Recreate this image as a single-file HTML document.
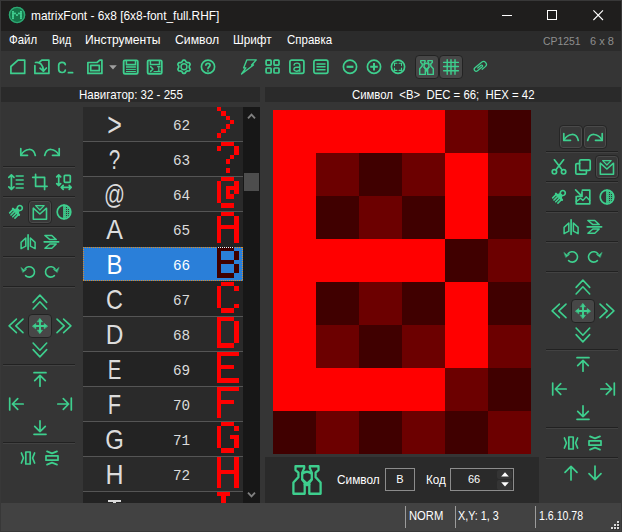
<!DOCTYPE html>
<html><head><meta charset="utf-8"><title>matrixFont</title>
<style>
html,body{margin:0;padding:0;}
body{width:622px;height:532px;overflow:hidden;background:#353535;position:relative;font-family:'Liberation Sans',sans-serif;}
</style></head><body>
<div style="position:absolute;left:0px;top:0px;width:622px;height:31px;background:#1f1e1d;"></div>
<svg style="position:absolute;left:0;top:0" width="32" height="30" viewBox="0 0 32 30"><circle cx="17.05" cy="14.95" r="8.3" fill="#157449"/><circle cx="17.05" cy="14.95" r="7.6" fill="none" stroke="#2ea873" stroke-width="1.3"/><g fill="#46d89a"><rect x="12.10" y="11.00" width="1.75" height="1.7"/><rect x="20.10" y="11.00" width="1.75" height="1.7"/><rect x="12.10" y="12.60" width="1.75" height="1.7"/><rect x="14.10" y="12.60" width="1.75" height="1.7"/><rect x="18.10" y="12.60" width="1.75" height="1.7"/><rect x="20.10" y="12.60" width="1.75" height="1.7"/><rect x="12.10" y="14.20" width="1.75" height="1.7"/><rect x="16.10" y="14.20" width="1.75" height="1.7"/><rect x="20.10" y="14.20" width="1.75" height="1.7"/><rect x="12.10" y="15.80" width="1.75" height="1.7"/><rect x="20.10" y="15.80" width="1.75" height="1.7"/><rect x="12.10" y="17.40" width="1.75" height="1.7"/><rect x="20.10" y="17.40" width="1.75" height="1.7"/></g></svg>
<div style="position:absolute;left:31px;top:11px;font-family:'Liberation Sans',sans-serif;font-size:11.9px;line-height:11.9px;color:#ffffff;white-space:pre;">matrixFont - 6x8 [6x8-font_full.RHF]</div>
<div style="position:absolute;left:502px;top:15px;width:10px;height:1px;background:#ffffff;"></div>
<div style="position:absolute;left:547px;top:10px;width:10px;height:10px;background:transparent;border:1px solid #fff;box-sizing:border-box;"></div>
<svg style="position:absolute;left:593.3px;top:10.2px" width="10.4" height="10.4" viewBox="0 0 10.4 10.4"><path d="M0.4 0.4L10 10M10 0.4L0.4 10" stroke="#fff" stroke-width="1.1"/></svg>
<div style="position:absolute;left:0px;top:31px;width:622px;height:20px;background:#2b2b2b;"></div>
<div style="position:absolute;left:8.60px;top:34.53px;font-family:'Liberation Sans',sans-serif;font-size:11.9px;line-height:11.9px;color:#ffffff;white-space:pre;transform-origin:0 0;transform:scaleX(0.9633);">Файл</div>
<div style="position:absolute;left:51.80px;top:34.53px;font-family:'Liberation Sans',sans-serif;font-size:11.9px;line-height:11.9px;color:#ffffff;white-space:pre;transform-origin:0 0;transform:scaleX(0.8868);">Вид</div>
<div style="position:absolute;left:85.30px;top:34.53px;font-family:'Liberation Sans',sans-serif;font-size:11.9px;line-height:11.9px;color:#ffffff;white-space:pre;transform-origin:0 0;transform:scaleX(1.0176);">Инструменты</div>
<div style="position:absolute;left:175.30px;top:34.53px;font-family:'Liberation Sans',sans-serif;font-size:11.9px;line-height:11.9px;color:#ffffff;white-space:pre;transform-origin:0 0;transform:scaleX(1.0280);">Символ</div>
<div style="position:absolute;left:233.40px;top:34.53px;font-family:'Liberation Sans',sans-serif;font-size:11.9px;line-height:11.9px;color:#ffffff;white-space:pre;transform-origin:0 0;transform:scaleX(0.9859);">Шрифт</div>
<div style="position:absolute;left:286.50px;top:34.53px;font-family:'Liberation Sans',sans-serif;font-size:11.9px;line-height:11.9px;color:#ffffff;white-space:pre;transform-origin:0 0;transform:scaleX(0.9656);">Справка</div>
<div style="position:absolute;left:542.80px;top:34.98px;font-family:'Liberation Sans',sans-serif;font-size:11.6px;line-height:11.6px;color:#8e8e8e;white-space:pre;transform-origin:0 0;transform:scaleX(0.8990);">CP1251</div>
<div style="position:absolute;left:590.30px;top:34.98px;font-family:'Liberation Sans',sans-serif;font-size:11.6px;line-height:11.6px;color:#8e8e8e;white-space:pre;transform-origin:0 0;transform:scaleX(0.9495);">6 x 8</div>
<svg style="position:absolute;left:8.0px;top:57.0px;overflow:visible" width="20" height="20" viewBox="0 0 20 20" fill="none" stroke="#3ecf8e" stroke-width="1.7" stroke-linecap="round" stroke-linejoin="round"><path d="M2.9 16.4V9.5L10 3.1H16.7V16.4Z"/></svg>
<svg style="position:absolute;left:32.0px;top:57.0px;overflow:visible" width="20" height="20" viewBox="0 0 20 20" fill="none" stroke="#3ecf8e" stroke-width="1.7" stroke-linecap="round" stroke-linejoin="round"><path d="M2.9 8.5V16.4H16.9V3.1H9.8L7.5 5.2"/><path d="M3.5 5.5C8 4.5 11.3 8 11.4 14"/><path d="M8 11.2L11.4 14.2L14.4 11"/></svg>
<svg style="position:absolute;left:56.3px;top:57.0px;overflow:visible" width="20" height="20" viewBox="0 0 20 20" fill="none" stroke="#3ecf8e" stroke-width="1.7" stroke-linecap="round" stroke-linejoin="round"><path d="M9.3 7.6C8.9 4.4 3 4.5 2.7 8V12.6C3 16.3 8.9 16.4 9.3 13.2"/><path d="M12.4 15.7H16.6"/></svg>
<svg style="position:absolute;left:85.2px;top:57.0px;overflow:visible" width="20" height="20" viewBox="0 0 20 20" fill="none" stroke="#3ecf8e" stroke-width="1.7" stroke-linecap="round" stroke-linejoin="round"><path d="M2.9 16.4V5.5H12L14.8 3.1H16.9V16.4Z"/><rect x="5.7" y="8.3" width="8.6" height="5.4"/></svg>
<svg style="position:absolute;left:121.19999999999999px;top:57.0px;overflow:visible" width="20" height="20" viewBox="0 0 20 20" fill="none" stroke="#3ecf8e" stroke-width="1.7" stroke-linecap="round" stroke-linejoin="round"><rect x="2.65" y="3.3" width="14.1" height="13.4" rx="1.3" stroke-width="1.85"/><path d="M5.4 3.6V7.4H14.5V3.6" stroke-width="1.5" stroke-linecap="butt" stroke-linejoin="miter"/><path d="M5 9.85H14.9" stroke-width="2.5" stroke-linecap="butt" stroke-opacity=".78"/><path d="M5 12.45H14.9" stroke-width=".95" stroke-linecap="butt"/><path d="M5 14.5H14.9" stroke-width="1.05" stroke-linecap="butt"/></svg>
<svg style="position:absolute;left:145.0px;top:57.0px;overflow:visible" width="20" height="20" viewBox="0 0 20 20" fill="none" stroke="#3ecf8e" stroke-width="1.7" stroke-linecap="round" stroke-linejoin="round"><rect x="2.65" y="3.3" width="14.1" height="13.4" rx="1.3" stroke-width="1.85"/><path d="M5.4 3.6V7.4H14.5V3.6" stroke-width="1.5" stroke-linecap="butt" stroke-linejoin="miter"/><path d="M5.6 9.6L8 12L5.6 14.4" stroke-width="1.5"/><path d="M9 14.5H13" stroke-width="1.2"/><path d="M13.8 9.8V14.4M12.6 9.7H15M12.6 14.4H15.2" stroke-width="1.2"/></svg>
<svg style="position:absolute;left:174.1px;top:57.0px;overflow:visible" width="20" height="20" viewBox="0 0 20 20" fill="none" stroke="#3ecf8e" stroke-width="1.7" stroke-linecap="round" stroke-linejoin="round"><path d="M15.24 9.80 L15.24 10.26 L15.33 10.74 L15.75 11.34 L16.10 12.02 L16.01 12.60 L15.77 13.13 L15.44 13.61 L14.97 13.97 L14.21 14.01 L13.48 13.95 L13.02 14.11 L12.62 14.34 L12.22 14.57 L11.85 14.89 L11.54 15.55 L11.13 16.19 L10.58 16.41 L10.00 16.46 L9.42 16.41 L8.87 16.19 L8.46 15.55 L8.15 14.89 L7.78 14.57 L7.38 14.34 L6.98 14.11 L6.52 13.95 L5.79 14.01 L5.03 13.97 L4.56 13.61 L4.23 13.13 L3.99 12.60 L3.90 12.02 L4.25 11.34 L4.67 10.74 L4.76 10.26 L4.76 9.80 L4.76 9.34 L4.67 8.86 L4.25 8.26 L3.90 7.58 L3.99 7.00 L4.23 6.47 L4.56 5.99 L5.03 5.63 L5.79 5.59 L6.52 5.65 L6.98 5.49 L7.38 5.26 L7.78 5.03 L8.15 4.71 L8.46 4.05 L8.87 3.41 L9.42 3.19 L10.00 3.14 L10.58 3.19 L11.13 3.41 L11.54 4.05 L11.85 4.71 L12.22 5.03 L12.62 5.26 L13.02 5.49 L13.48 5.65 L14.21 5.59 L14.97 5.63 L15.44 5.99 L15.77 6.47 L16.01 7.00 L16.10 7.58 L15.75 8.26 L15.33 8.86 L15.24 9.34Z"/><circle cx="10" cy="9.8" r="2.95" stroke-width="1.5"/></svg>
<svg style="position:absolute;left:198.2px;top:57.0px;overflow:visible" width="20" height="20" viewBox="0 0 20 20" fill="none" stroke="#3ecf8e" stroke-width="1.7" stroke-linecap="round" stroke-linejoin="round"><circle cx="10" cy="9.8" r="6.6"/><path d="M7.9 8.1C7.9 5.7 12.1 5.7 12.1 8.1C12.1 9.7 10 9.8 10 11.6"/><path d="M10 13.9V14"/></svg>
<svg style="position:absolute;left:239.3px;top:57.0px;overflow:visible" width="20" height="20" viewBox="0 0 20 20" fill="none" stroke="#3ecf8e" stroke-width="1.7" stroke-linecap="round" stroke-linejoin="round"><path d="M7.8 2.9H17.3L12.6 8H14.5L2.6 17L6.8 10.9H4.6Z" stroke-width="1.4"/></svg>
<svg style="position:absolute;left:263.0px;top:57.0px;overflow:visible" width="20" height="20" viewBox="0 0 20 20" fill="none" stroke="#3ecf8e" stroke-width="1.7" stroke-linecap="round" stroke-linejoin="round"><rect x="3.1" y="3.1" width="5" height="5" rx=".8"/><rect x="11" y="3.1" width="5" height="5" rx=".8"/><rect x="3.1" y="11" width="5" height="5" rx=".8"/><rect x="11" y="11" width="5" height="5" rx=".8"/></svg>
<svg style="position:absolute;left:287.3px;top:57.0px;overflow:visible" width="20" height="20" viewBox="0 0 20 20" fill="none" stroke="#3ecf8e" stroke-width="1.7" stroke-linecap="round" stroke-linejoin="round"><rect x="2.9" y="3.1" width="14" height="13.3" rx="1.8"/><path d="M7 8C7.6 5.4 12.8 5.4 12.8 8.3V14.2M12.8 10.2H9.8C6 10.2 6 14.2 9.5 14.2C11.6 14.2 12.8 13 12.8 11.8" stroke-width="1.4"/></svg>
<svg style="position:absolute;left:311.1px;top:57.0px;overflow:visible" width="20" height="20" viewBox="0 0 20 20" fill="none" stroke="#3ecf8e" stroke-width="1.7" stroke-linecap="round" stroke-linejoin="round"><rect x="2.9" y="3.1" width="14" height="13.3" rx="1.8"/><path d="M6 6.9H14M6 9.8H14M6 12.7H14" stroke-width="1.5"/></svg>
<svg style="position:absolute;left:340.0px;top:57.0px;overflow:visible" width="20" height="20" viewBox="0 0 20 20" fill="none" stroke="#3ecf8e" stroke-width="1.7" stroke-linecap="round" stroke-linejoin="round"><circle cx="10" cy="9.8" r="6.6"/><path d="M6.6 9.8H13.4" stroke-width="2.2" stroke-linecap="butt"/></svg>
<svg style="position:absolute;left:364.0px;top:57.0px;overflow:visible" width="20" height="20" viewBox="0 0 20 20" fill="none" stroke="#3ecf8e" stroke-width="1.7" stroke-linecap="round" stroke-linejoin="round"><circle cx="10" cy="9.8" r="6.6"/><path d="M6.2 9.8H13.8M10 6V13.6" stroke-width="2" stroke-linecap="butt"/></svg>
<svg style="position:absolute;left:388.3px;top:57.0px;overflow:visible" width="20" height="20" viewBox="0 0 20 20" fill="none" stroke="#3ecf8e" stroke-width="1.7" stroke-linecap="round" stroke-linejoin="round"><circle cx="10" cy="9.8" r="6.6"/><path d="M6.5 8.6V6.2H8.9M11.1 6.2H13.5V8.6M13.5 11V13.4H11.1M8.9 13.4H6.5V11" stroke-width="1.1"/></svg>
<svg style="position:absolute;left:108.5px;top:65px" width="8" height="5" viewBox="0 0 8 5"><path d="M0.2 0.3H7.8L4 4.4Z" fill="#a0a0a0"/></svg>
<div style="position:absolute;left:415px;top:55px;width:24px;height:24px;background:#474747;border:1px solid #232323;border-radius:4px;box-sizing:border-box;"></div>
<div style="position:absolute;left:439px;top:55px;width:24px;height:24px;background:#474747;border:1px solid #232323;border-radius:4px;box-sizing:border-box;"></div>
<svg style="position:absolute;left:419.4px;top:59.650000000000006px;overflow:visible" width="15" height="15" viewBox="0 0 15 15" fill="none" stroke="#3ecf8e" stroke-width="1.45" stroke-linecap="round" stroke-linejoin="round"><g transform="scale(.5)" stroke-width="2.9"><path d="M3.5 1.25H12.2V3.15L10.2 7.65V14.45L12.7 17.85V28.75H1.4V17.45L6.4 12.15V7.65L3.5 5.05Z"/><path d="M26.5 1.25H17.8V3.15L19.8 7.65V14.45L17.3 17.85V28.75H28.6V17.45L23.6 12.15V7.65L26.5 5.05Z"/><path d="M10.3 8.7Q15 4.7 19.7 8.7M10.3 14.45L15 18.5L19.7 14.45M15 18.5V22"/></g></svg>
<svg style="position:absolute;left:441.2px;top:57.0px;overflow:visible" width="20" height="20" viewBox="0 0 20 20" fill="none" stroke="#3ecf8e" stroke-width="1.7" stroke-linecap="round" stroke-linejoin="round"><path d="M6.2 2.6V17.3M10 2.6V17.3M14 2.6V17.3M2.6 5.4H17.4M2.6 9.5H17.4M2.6 13.8H17.4" stroke-width="1.4"/></svg>
<svg style="position:absolute;left:470.5px;top:57.0px;overflow:visible" width="20" height="20" viewBox="0 0 20 20" fill="none" stroke="#3ecf8e" stroke-width="1.7" stroke-linecap="round" stroke-linejoin="round"><g transform="translate(9.5 9.9) rotate(-40) translate(-.4 0)"><path d="M0.2 2.9H4.3A2.9 2.9 0 0 0 4.3 -2.9H-4.4A2 2 0 0 0 -4.4 1.1H1.8A1 1 0 0 0 1.8 -0.9H-2.4" stroke-width="1.25"/></g></svg>
<div style="position:absolute;left:1px;top:87px;width:259px;height:15px;background:#2a2a2a;"></div>
<div style="position:absolute;left:265px;top:87px;width:356px;height:15px;background:#2a2a2a;"></div>
<div style="position:absolute;left:78.70px;top:88.50px;font-family:'Liberation Sans',sans-serif;font-size:12.4px;line-height:12.4px;color:#ffffff;white-space:pre;transform-origin:0 0;transform:scaleX(0.9279);">Навигатор: 32 - 255</div>
<div style="position:absolute;left:352.10px;top:88.50px;font-family:'Liberation Sans',sans-serif;font-size:12.4px;line-height:12.4px;color:#ffffff;white-space:pre;transform-origin:0 0;transform:scaleX(0.9172);">Символ  &lt;B&gt;  DEC = 66;  HEX = 42</div>
<div style="position:absolute;left:28px;top:200px;width:24px;height:24px;background:#383838;border:1px solid #262626;border-radius:4px;box-sizing:border-box;box-shadow:inset 0 0 0 1px #4a4a4a;"></div>
<svg style="position:absolute;left:18.0px;top:142.0px;overflow:visible" width="20" height="20" viewBox="0 0 20 20" fill="none" stroke="#3ecf8e" stroke-width="1.7" stroke-linecap="round" stroke-linejoin="round"><path d="M2.8 6.5V13.3H9.5"/><path d="M2.8 13.3C7 6 15.5 5 17.3 13.5"/></svg>
<svg style="position:absolute;left:42.4px;top:142.0px;overflow:visible" width="20" height="20" viewBox="0 0 20 20" fill="none" stroke="#3ecf8e" stroke-width="1.7" stroke-linecap="round" stroke-linejoin="round"><path d="M17.2 6.5V13.3H10.5"/><path d="M17.2 13.3C13 6 4.5 5 2.7 13.5"/></svg>
<svg style="position:absolute;left:6.0px;top:172.0px;overflow:visible" width="20" height="20" viewBox="0 0 20 20" fill="none" stroke="#3ecf8e" stroke-width="1.7" stroke-linecap="round" stroke-linejoin="round"><path d="M5.4 2.8V17.4M2.8 5.4L5.4 2.8L8 5.4M2.8 14.8L5.4 17.4L8 14.8"/><path d="M10.2 4H17.2M10.2 8H17.2M10.2 12.1H17.2M10.2 16H17.2" stroke-width="1.5"/></svg>
<svg style="position:absolute;left:30.0px;top:172.0px;overflow:visible" width="20" height="20" viewBox="0 0 20 20" fill="none" stroke="#3ecf8e" stroke-width="1.7" stroke-linecap="round" stroke-linejoin="round"><path d="M5.6 2.4V14.3H17.1"/><path d="M2.7 5.3H14.6V17.4"/></svg>
<svg style="position:absolute;left:54.0px;top:172.0px;overflow:visible" width="20" height="20" viewBox="0 0 20 20" fill="none" stroke="#3ecf8e" stroke-width="1.7" stroke-linecap="round" stroke-linejoin="round"><rect x="10.3" y="3.3" width="6" height="7" rx=".8"/><path d="M4.7 2.8V13.6M2.7 4.8L4.7 2.8L6.7 4.8M2.7 11.6L4.7 13.6L6.7 11.6"/><path d="M7.2 15.3H17.2M9.2 13.3L7.2 15.3L9.2 17.3M15.2 13.3L17.2 15.3L15.2 17.3"/></svg>
<svg style="position:absolute;left:6.0px;top:202.0px;overflow:visible" width="20" height="20" viewBox="0 0 20 20" fill="none" stroke="#3ecf8e" stroke-width="1.7" stroke-linecap="round" stroke-linejoin="round"><g transform="translate(13.8 6) rotate(135)"><circle cx="0" cy="0" r="2.5"/><path d="M2.3 -1.5L5 -2.7V2.7L2.3 1.5Z" fill="#3ecf8e" stroke-width="1"/><path d="M5.4 -4.3V4.3" stroke-width="2.2"/><path d="M6 -3.7H10.6M6 -1.25H11.2M6 1.25H11.2M6 3.7H10.6" stroke-width="1.6"/></g></svg>
<svg style="position:absolute;left:30.0px;top:202.0px;overflow:visible" width="20" height="20" viewBox="0 0 20 20" fill="none" stroke="#3ecf8e" stroke-width="1.7" stroke-linecap="round" stroke-linejoin="round"><path d="M3.3 6.2V17.2H16.5V6.2L9.9 12Z" stroke-width="1.6"/><path d="M5.6 3.6H14.2L9.9 8Z" fill="#3ecf8e" fill-opacity=".12" stroke-width="1.2"/></svg>
<svg style="position:absolute;left:54.0px;top:202.0px;overflow:visible" width="20" height="20" viewBox="0 0 20 20" fill="none" stroke="#3ecf8e" stroke-width="1.7" stroke-linecap="round" stroke-linejoin="round"><circle cx="10" cy="10" r="6.8"/><path d="M10 3.2V16.8"/><path d="M11.50 3.88V16.12M13.50 4.76V15.24M15.50 6.93V13.07M10 4.50H13.07M10 6.50H15.24M10 8.50H16.12M10 10.50H16.28M10 12.50H15.78M10 14.50H14.41" stroke-width="1" stroke-linecap="butt" stroke-opacity=".85" shape-rendering="crispEdges"/></svg>
<svg style="position:absolute;left:18.0px;top:232.0px;overflow:visible" width="20" height="20" viewBox="0 0 20 20" fill="none" stroke="#3ecf8e" stroke-width="1.7" stroke-linecap="round" stroke-linejoin="round"><path d="M10.1 2.9V17.3"/><path d="M7.8 6V14.2L3.1 16.7V10.4Z" stroke-width="1.5"/><path d="M12.4 6V14.2L17.1 16.7V10.4Z" stroke-width="1.5"/></svg>
<svg style="position:absolute;left:42.4px;top:232.0px;overflow:visible" width="20" height="20" viewBox="0 0 20 20" fill="none" stroke="#3ecf8e" stroke-width="1.7" stroke-linecap="round" stroke-linejoin="round"><path d="M2.2 9.8H16.6"/><path d="M2.9 3.5H9.8L14.2 7.6H7.9Z" stroke-width="1.5"/><path d="M7.9 12H14.2L9.8 16.2H2.9Z" stroke-width="1.5"/></svg>
<svg style="position:absolute;left:18.0px;top:262.0px;overflow:visible" width="20" height="20" viewBox="0 0 20 20" fill="none" stroke="#3ecf8e" stroke-width="1.7" stroke-linecap="round" stroke-linejoin="round"><path d="M7 7A5.2 5.2 0 1 1 7.6 13.6" stroke-width="1.6"/><path d="M3.2 5.6L6 8L8.6 7.4L5 10.3Z" fill="#3ecf8e" stroke-width=".5"/></svg>
<svg style="position:absolute;left:42.4px;top:262.0px;overflow:visible" width="20" height="20" viewBox="0 0 20 20" fill="none" stroke="#3ecf8e" stroke-width="1.7" stroke-linecap="round" stroke-linejoin="round"><path d="M13 7A5.2 5.2 0 1 0 12.4 13.6" stroke-width="1.6"/><path d="M16.8 5.6L14 8L11.4 7.4L15 10.3Z" fill="#3ecf8e" stroke-width=".5"/></svg>
<div style="position:absolute;left:3px;top:166px;width:72px;height:1px;background:#212121;"></div>
<div style="position:absolute;left:3px;top:167px;width:72px;height:1px;background:#424242;"></div>
<div style="position:absolute;left:3px;top:196px;width:72px;height:1px;background:#212121;"></div>
<div style="position:absolute;left:3px;top:197px;width:72px;height:1px;background:#424242;"></div>
<div style="position:absolute;left:3px;top:226px;width:72px;height:1px;background:#212121;"></div>
<div style="position:absolute;left:3px;top:227px;width:72px;height:1px;background:#424242;"></div>
<div style="position:absolute;left:3px;top:256px;width:72px;height:1px;background:#212121;"></div>
<div style="position:absolute;left:3px;top:257px;width:72px;height:1px;background:#424242;"></div>
<div style="position:absolute;left:3px;top:286px;width:72px;height:1px;background:#212121;"></div>
<div style="position:absolute;left:3px;top:287px;width:72px;height:1px;background:#424242;"></div>
<div style="position:absolute;left:3px;top:364px;width:72px;height:1px;background:#212121;"></div>
<div style="position:absolute;left:3px;top:365px;width:72px;height:1px;background:#424242;"></div>
<div style="position:absolute;left:3px;top:442px;width:72px;height:1px;background:#212121;"></div>
<div style="position:absolute;left:3px;top:443px;width:72px;height:1px;background:#424242;"></div>
<svg style="position:absolute;left:30.0px;top:292.0px;overflow:visible" width="20" height="20" viewBox="0 0 20 20" fill="none" stroke="#3ecf8e" stroke-width="1.7" stroke-linecap="round" stroke-linejoin="round"><path d="M3.1 10.4L9.9 3.1L16.7 10.4M3.1 17L9.9 9.8L16.7 17" stroke-width="1.6"/></svg>
<svg style="position:absolute;left:30.0px;top:340.0px;overflow:visible" width="20" height="20" viewBox="0 0 20 20" fill="none" stroke="#3ecf8e" stroke-width="1.7" stroke-linecap="round" stroke-linejoin="round"><path d="M3.1 3L9.9 10.2L16.7 3M3.1 9.6L9.9 16.9L16.7 9.6" stroke-width="1.6"/></svg>
<svg style="position:absolute;left:6.0px;top:316.0px;overflow:visible" width="20" height="20" viewBox="0 0 20 20" fill="none" stroke="#3ecf8e" stroke-width="1.7" stroke-linecap="round" stroke-linejoin="round"><path d="M10.4 3.1L3.1 9.9L10.4 16.7M17 3.1L9.8 9.9L17 16.7" stroke-width="1.6"/></svg>
<svg style="position:absolute;left:54.0px;top:316.0px;overflow:visible" width="20" height="20" viewBox="0 0 20 20" fill="none" stroke="#3ecf8e" stroke-width="1.7" stroke-linecap="round" stroke-linejoin="round"><path d="M3 3.1L10.2 9.9L3 16.7M9.6 3.1L16.9 9.9L9.6 16.7" stroke-width="1.6"/></svg>
<div style="position:absolute;left:28px;top:314px;width:24px;height:24px;background:#474747;border:1px solid #232323;border-radius:4px;box-sizing:border-box;"></div>
<svg style="position:absolute;left:30.200000000000003px;top:316.1px;overflow:visible" width="20" height="20" viewBox="0 0 20 20" fill="none" stroke="#3ecf8e" stroke-width="1.7" stroke-linecap="round" stroke-linejoin="round"><path d="M10 4.5V15.5M4.5 10H15.5" stroke-width="1.9"/><path d="M10 2.6L12.5 5.8H7.5ZM10 17.4L12.5 14.2H7.5ZM2.6 10L5.8 7.5V12.5ZM17.4 10L14.2 7.5V12.5Z" fill="#3ecf8e" stroke-width=".6"/></svg>
<svg style="position:absolute;left:30.0px;top:369.0px;overflow:visible" width="20" height="20" viewBox="0 0 20 20" fill="none" stroke="#3ecf8e" stroke-width="1.7" stroke-linecap="round" stroke-linejoin="round"><path d="M4 3.7H16"/><path d="M10 17.2V6.4M4.7 11.7L10 6.4L15.3 11.7"/></svg>
<svg style="position:absolute;left:5.5px;top:394.0px;overflow:visible" width="20" height="20" viewBox="0 0 20 20" fill="none" stroke="#3ecf8e" stroke-width="1.7" stroke-linecap="round" stroke-linejoin="round"><path d="M3.7 4V16"/><path d="M17.2 10H6.4M11.7 4.7L6.4 10L11.7 15.3"/></svg>
<svg style="position:absolute;left:54.5px;top:394.0px;overflow:visible" width="20" height="20" viewBox="0 0 20 20" fill="none" stroke="#3ecf8e" stroke-width="1.7" stroke-linecap="round" stroke-linejoin="round"><path d="M16.3 4V16"/><path d="M2.8 10H13.6M8.3 4.7L13.6 10L8.3 15.3"/></svg>
<svg style="position:absolute;left:30.0px;top:418.0px;overflow:visible" width="20" height="20" viewBox="0 0 20 20" fill="none" stroke="#3ecf8e" stroke-width="1.7" stroke-linecap="round" stroke-linejoin="round"><path d="M4 16.3H16"/><path d="M10 2.8V13.6M4.7 8.3L10 13.6L15.3 8.3"/></svg>
<svg style="position:absolute;left:18.0px;top:448.0px;overflow:visible" width="20" height="20" viewBox="0 0 20 20" fill="none" stroke="#3ecf8e" stroke-width="1.7" stroke-linecap="round" stroke-linejoin="round"><rect x="7.8" y="4" width="4.4" height="12"/><path d="M3.4 5L5.4 10L3.4 15M16.6 5L14.6 10L16.6 15"/></svg>
<svg style="position:absolute;left:42.4px;top:448.0px;overflow:visible" width="20" height="20" viewBox="0 0 20 20" fill="none" stroke="#3ecf8e" stroke-width="1.7" stroke-linecap="round" stroke-linejoin="round"><rect x="4" y="7.8" width="12" height="4.4"/><path d="M5 3.4L10 5.4L15 3.4M5 16.6L10 14.6L15 16.6"/></svg>
<div style="position:absolute;left:559px;top:125px;width:24px;height:24px;background:#383838;border:1px solid #262626;border-radius:4px;box-sizing:border-box;box-shadow:inset 0 0 0 1px #4a4a4a;"></div>
<div style="position:absolute;left:583px;top:125px;width:24px;height:24px;background:#383838;border:1px solid #262626;border-radius:4px;box-sizing:border-box;box-shadow:inset 0 0 0 1px #4a4a4a;"></div>
<div style="position:absolute;left:595px;top:155px;width:24px;height:24px;background:#383838;border:1px solid #262626;border-radius:4px;box-sizing:border-box;box-shadow:inset 0 0 0 1px #4a4a4a;"></div>
<svg style="position:absolute;left:561.0px;top:127.0px;overflow:visible" width="20" height="20" viewBox="0 0 20 20" fill="none" stroke="#3ecf8e" stroke-width="1.7" stroke-linecap="round" stroke-linejoin="round"><path d="M2.8 6.5V13.3H9.5"/><path d="M2.8 13.3C7 6 15.5 5 17.3 13.5"/></svg>
<svg style="position:absolute;left:585.0px;top:127.0px;overflow:visible" width="20" height="20" viewBox="0 0 20 20" fill="none" stroke="#3ecf8e" stroke-width="1.7" stroke-linecap="round" stroke-linejoin="round"><path d="M17.2 6.5V13.3H10.5"/><path d="M17.2 13.3C13 6 4.5 5 2.7 13.5"/></svg>
<svg style="position:absolute;left:549.0px;top:157.0px;overflow:visible" width="20" height="20" viewBox="0 0 20 20" fill="none" stroke="#3ecf8e" stroke-width="1.7" stroke-linecap="round" stroke-linejoin="round"><circle cx="5.4" cy="14.8" r="2.2"/><circle cx="14.6" cy="14.8" r="2.2"/><path d="M6.8 13L14.6 2.8M13.2 13L5.4 2.8"/></svg>
<svg style="position:absolute;left:573.0px;top:157.0px;overflow:visible" width="20" height="20" viewBox="0 0 20 20" fill="none" stroke="#3ecf8e" stroke-width="1.7" stroke-linecap="round" stroke-linejoin="round"><rect x="6.6" y="2.8" width="10.6" height="10.6" rx="1.2"/><path d="M6.6 6.6H4C3.3 6.6 2.8 7.1 2.8 7.8V16C2.8 16.7 3.3 17.2 4 17.2H12.2C12.9 17.2 13.4 16.7 13.4 16V13.4"/></svg>
<svg style="position:absolute;left:597.0px;top:157.0px;overflow:visible" width="20" height="20" viewBox="0 0 20 20" fill="none" stroke="#3ecf8e" stroke-width="1.7" stroke-linecap="round" stroke-linejoin="round"><path d="M3.3 6.2V17.2H16.5V6.2L9.9 12Z" stroke-width="1.6"/><path d="M5.6 3.6H14.2L9.9 8Z" fill="#3ecf8e" fill-opacity=".12" stroke-width="1.2"/></svg>
<svg style="position:absolute;left:549.0px;top:187.0px;overflow:visible" width="20" height="20" viewBox="0 0 20 20" fill="none" stroke="#3ecf8e" stroke-width="1.7" stroke-linecap="round" stroke-linejoin="round"><g transform="translate(13.8 6) rotate(135)"><circle cx="0" cy="0" r="2.5"/><path d="M2.3 -1.5L5 -2.7V2.7L2.3 1.5Z" fill="#3ecf8e" stroke-width="1"/><path d="M5.4 -4.3V4.3" stroke-width="2.2"/><path d="M6 -3.7H10.6M6 -1.25H11.2M6 1.25H11.2M6 3.7H10.6" stroke-width="1.6"/></g></svg>
<svg style="position:absolute;left:573.0px;top:187.0px;overflow:visible" width="20" height="20" viewBox="0 0 20 20" fill="none" stroke="#3ecf8e" stroke-width="1.7" stroke-linecap="round" stroke-linejoin="round"><path d="M9.4 3.2H16.8V16.8H3.2V9.6"/><path d="M3.2 14.6L7.4 11.2L10 13.4L13.2 9.8L16.8 13.6" stroke-width="1.4"/><path d="M2.6 2.8L9 9.4M9 4.8V9.4H4.4"/></svg>
<svg style="position:absolute;left:597.0px;top:187.0px;overflow:visible" width="20" height="20" viewBox="0 0 20 20" fill="none" stroke="#3ecf8e" stroke-width="1.7" stroke-linecap="round" stroke-linejoin="round"><circle cx="10" cy="10" r="6.8"/><path d="M10 3.2V16.8"/><path d="M11.50 3.88V16.12M13.50 4.76V15.24M15.50 6.93V13.07M10 4.50H13.07M10 6.50H15.24M10 8.50H16.12M10 10.50H16.28M10 12.50H15.78M10 14.50H14.41" stroke-width="1" stroke-linecap="butt" stroke-opacity=".85" shape-rendering="crispEdges"/></svg>
<svg style="position:absolute;left:561.0px;top:217.0px;overflow:visible" width="20" height="20" viewBox="0 0 20 20" fill="none" stroke="#3ecf8e" stroke-width="1.7" stroke-linecap="round" stroke-linejoin="round"><path d="M10.1 2.9V17.3"/><path d="M7.8 6V14.2L3.1 16.7V10.4Z" stroke-width="1.5"/><path d="M12.4 6V14.2L17.1 16.7V10.4Z" stroke-width="1.5"/></svg>
<svg style="position:absolute;left:585.0px;top:217.0px;overflow:visible" width="20" height="20" viewBox="0 0 20 20" fill="none" stroke="#3ecf8e" stroke-width="1.7" stroke-linecap="round" stroke-linejoin="round"><path d="M2.2 9.8H16.6"/><path d="M2.9 3.5H9.8L14.2 7.6H7.9Z" stroke-width="1.5"/><path d="M7.9 12H14.2L9.8 16.2H2.9Z" stroke-width="1.5"/></svg>
<svg style="position:absolute;left:561.0px;top:247.0px;overflow:visible" width="20" height="20" viewBox="0 0 20 20" fill="none" stroke="#3ecf8e" stroke-width="1.7" stroke-linecap="round" stroke-linejoin="round"><path d="M7 7A5.2 5.2 0 1 1 7.6 13.6" stroke-width="1.6"/><path d="M3.2 5.6L6 8L8.6 7.4L5 10.3Z" fill="#3ecf8e" stroke-width=".5"/></svg>
<svg style="position:absolute;left:585.0px;top:247.0px;overflow:visible" width="20" height="20" viewBox="0 0 20 20" fill="none" stroke="#3ecf8e" stroke-width="1.7" stroke-linecap="round" stroke-linejoin="round"><path d="M13 7A5.2 5.2 0 1 0 12.4 13.6" stroke-width="1.6"/><path d="M16.8 5.6L14 8L11.4 7.4L15 10.3Z" fill="#3ecf8e" stroke-width=".5"/></svg>
<div style="position:absolute;left:546px;top:151px;width:72px;height:1px;background:#212121;"></div>
<div style="position:absolute;left:546px;top:152px;width:72px;height:1px;background:#424242;"></div>
<div style="position:absolute;left:546px;top:181px;width:72px;height:1px;background:#212121;"></div>
<div style="position:absolute;left:546px;top:182px;width:72px;height:1px;background:#424242;"></div>
<div style="position:absolute;left:546px;top:211px;width:72px;height:1px;background:#212121;"></div>
<div style="position:absolute;left:546px;top:212px;width:72px;height:1px;background:#424242;"></div>
<div style="position:absolute;left:546px;top:241px;width:72px;height:1px;background:#212121;"></div>
<div style="position:absolute;left:546px;top:242px;width:72px;height:1px;background:#424242;"></div>
<div style="position:absolute;left:546px;top:271px;width:72px;height:1px;background:#212121;"></div>
<div style="position:absolute;left:546px;top:272px;width:72px;height:1px;background:#424242;"></div>
<div style="position:absolute;left:546px;top:349px;width:72px;height:1px;background:#212121;"></div>
<div style="position:absolute;left:546px;top:350px;width:72px;height:1px;background:#424242;"></div>
<div style="position:absolute;left:546px;top:427px;width:72px;height:1px;background:#212121;"></div>
<div style="position:absolute;left:546px;top:428px;width:72px;height:1px;background:#424242;"></div>
<div style="position:absolute;left:546px;top:457px;width:72px;height:1px;background:#212121;"></div>
<div style="position:absolute;left:546px;top:458px;width:72px;height:1px;background:#424242;"></div>
<svg style="position:absolute;left:573.0px;top:277.0px;overflow:visible" width="20" height="20" viewBox="0 0 20 20" fill="none" stroke="#3ecf8e" stroke-width="1.7" stroke-linecap="round" stroke-linejoin="round"><path d="M3.1 10.4L9.9 3.1L16.7 10.4M3.1 17L9.9 9.8L16.7 17" stroke-width="1.6"/></svg>
<svg style="position:absolute;left:573.0px;top:325.0px;overflow:visible" width="20" height="20" viewBox="0 0 20 20" fill="none" stroke="#3ecf8e" stroke-width="1.7" stroke-linecap="round" stroke-linejoin="round"><path d="M3.1 3L9.9 10.2L16.7 3M3.1 9.6L9.9 16.9L16.7 9.6" stroke-width="1.6"/></svg>
<svg style="position:absolute;left:549.0px;top:301.0px;overflow:visible" width="20" height="20" viewBox="0 0 20 20" fill="none" stroke="#3ecf8e" stroke-width="1.7" stroke-linecap="round" stroke-linejoin="round"><path d="M10.4 3.1L3.1 9.9L10.4 16.7M17 3.1L9.8 9.9L17 16.7" stroke-width="1.6"/></svg>
<svg style="position:absolute;left:597.0px;top:301.0px;overflow:visible" width="20" height="20" viewBox="0 0 20 20" fill="none" stroke="#3ecf8e" stroke-width="1.7" stroke-linecap="round" stroke-linejoin="round"><path d="M3 3.1L10.2 9.9L3 16.7M9.6 3.1L16.9 9.9L9.6 16.7" stroke-width="1.6"/></svg>
<div style="position:absolute;left:571px;top:299px;width:24px;height:24px;background:#474747;border:1px solid #232323;border-radius:4px;box-sizing:border-box;"></div>
<svg style="position:absolute;left:573.2px;top:301.1px;overflow:visible" width="20" height="20" viewBox="0 0 20 20" fill="none" stroke="#3ecf8e" stroke-width="1.7" stroke-linecap="round" stroke-linejoin="round"><path d="M10 4.5V15.5M4.5 10H15.5" stroke-width="1.9"/><path d="M10 2.6L12.5 5.8H7.5ZM10 17.4L12.5 14.2H7.5ZM2.6 10L5.8 7.5V12.5ZM17.4 10L14.2 7.5V12.5Z" fill="#3ecf8e" stroke-width=".6"/></svg>
<svg style="position:absolute;left:573.0px;top:354.0px;overflow:visible" width="20" height="20" viewBox="0 0 20 20" fill="none" stroke="#3ecf8e" stroke-width="1.7" stroke-linecap="round" stroke-linejoin="round"><path d="M4 3.7H16"/><path d="M10 17.2V6.4M4.7 11.7L10 6.4L15.3 11.7"/></svg>
<svg style="position:absolute;left:548.5px;top:379.0px;overflow:visible" width="20" height="20" viewBox="0 0 20 20" fill="none" stroke="#3ecf8e" stroke-width="1.7" stroke-linecap="round" stroke-linejoin="round"><path d="M3.7 4V16"/><path d="M17.2 10H6.4M11.7 4.7L6.4 10L11.7 15.3"/></svg>
<svg style="position:absolute;left:597.5px;top:379.0px;overflow:visible" width="20" height="20" viewBox="0 0 20 20" fill="none" stroke="#3ecf8e" stroke-width="1.7" stroke-linecap="round" stroke-linejoin="round"><path d="M16.3 4V16"/><path d="M2.8 10H13.6M8.3 4.7L13.6 10L8.3 15.3"/></svg>
<svg style="position:absolute;left:573.0px;top:403.0px;overflow:visible" width="20" height="20" viewBox="0 0 20 20" fill="none" stroke="#3ecf8e" stroke-width="1.7" stroke-linecap="round" stroke-linejoin="round"><path d="M4 16.3H16"/><path d="M10 2.8V13.6M4.7 8.3L10 13.6L15.3 8.3"/></svg>
<svg style="position:absolute;left:561.0px;top:433.0px;overflow:visible" width="20" height="20" viewBox="0 0 20 20" fill="none" stroke="#3ecf8e" stroke-width="1.7" stroke-linecap="round" stroke-linejoin="round"><rect x="7.8" y="4" width="4.4" height="12"/><path d="M3.4 5L5.4 10L3.4 15M16.6 5L14.6 10L16.6 15"/></svg>
<svg style="position:absolute;left:585.0px;top:433.0px;overflow:visible" width="20" height="20" viewBox="0 0 20 20" fill="none" stroke="#3ecf8e" stroke-width="1.7" stroke-linecap="round" stroke-linejoin="round"><rect x="4" y="7.8" width="12" height="4.4"/><path d="M5 3.4L10 5.4L15 3.4M5 16.6L10 14.6L15 16.6"/></svg>
<svg style="position:absolute;left:561.0px;top:463.0px;overflow:visible" width="20" height="20" viewBox="0 0 20 20" fill="none" stroke="#3ecf8e" stroke-width="1.7" stroke-linecap="round" stroke-linejoin="round"><path d="M10 17V3.4M4 9.4L10 3.4L16 9.4"/></svg>
<svg style="position:absolute;left:585.0px;top:463.0px;overflow:visible" width="20" height="20" viewBox="0 0 20 20" fill="none" stroke="#3ecf8e" stroke-width="1.7" stroke-linecap="round" stroke-linejoin="round"><path d="M10 3V16.6M4 10.6L10 16.6L16 10.6"/></svg>
<div style="position:absolute;left:83px;top:107px;width:160px;height:396px;overflow:hidden;background:#232323">
<div style="position:absolute;left:0;top:0px;width:160px;height:35px;background:#2a2a2a">
<div style="position:absolute;left:0;top:34px;width:160px;height:1px;background:#555555"></div>
<div style="position:absolute;left:0;top:2.6px;width:63px;text-align:center;font-family:'Liberation Sans',sans-serif;font-size:27.2px;line-height:30px;transform:scale(0.92,1.2);color:#dcdcdc">&gt;</div>
<div style="position:absolute;left:63px;top:10px;width:71px;text-align:center;font-family:'Liberation Mono',monospace;font-size:14.3px;line-height:18px;color:#dcdcdc">62</div>
<svg style="position:absolute;left:134px;top:0" width="26" height="35" shape-rendering="crispEdges" fill="#ff0000"><rect x="0" y="0" width="4" height="4"/><rect x="4" y="4" width="5" height="5"/><rect x="9" y="9" width="4" height="4"/><rect x="13" y="13" width="4" height="4"/><rect x="9" y="17" width="4" height="5"/><rect x="4" y="22" width="5" height="4"/><rect x="0" y="26" width="4" height="5"/></svg>
</div>
<div style="position:absolute;left:0;top:35px;width:160px;height:35px;background:#232323">
<div style="position:absolute;left:0;top:34px;width:160px;height:1px;background:#555555"></div>
<div style="position:absolute;left:0;top:2.6px;width:63px;text-align:center;font-family:'Liberation Sans',sans-serif;font-size:27.2px;line-height:30px;transform:scale(0.76,1);color:#dcdcdc">?</div>
<div style="position:absolute;left:63px;top:10px;width:71px;text-align:center;font-family:'Liberation Mono',monospace;font-size:14.3px;line-height:18px;color:#dcdcdc">63</div>
<svg style="position:absolute;left:134px;top:0" width="26" height="35" shape-rendering="crispEdges" fill="#ff0000"><rect x="4" y="0" width="13" height="4"/><rect x="0" y="4" width="4" height="5"/><rect x="17" y="4" width="5" height="5"/><rect x="17" y="9" width="5" height="4"/><rect x="13" y="13" width="4" height="4"/><rect x="9" y="17" width="4" height="5"/><rect x="9" y="26" width="4" height="5"/></svg>
</div>
<div style="position:absolute;left:0;top:70px;width:160px;height:35px;background:#2a2a2a">
<div style="position:absolute;left:0;top:34px;width:160px;height:1px;background:#555555"></div>
<div style="position:absolute;left:0;top:2.6px;width:63px;text-align:center;font-family:'Liberation Sans',sans-serif;font-size:27.2px;line-height:30px;transform:scale(0.76,1);color:#dcdcdc">@</div>
<div style="position:absolute;left:63px;top:10px;width:71px;text-align:center;font-family:'Liberation Mono',monospace;font-size:14.3px;line-height:18px;color:#dcdcdc">64</div>
<svg style="position:absolute;left:134px;top:0" width="26" height="35" shape-rendering="crispEdges" fill="#ff0000"><rect x="4" y="0" width="13" height="4"/><rect x="0" y="4" width="4" height="5"/><rect x="17" y="4" width="5" height="5"/><rect x="0" y="9" width="4" height="4"/><rect x="9" y="9" width="13" height="4"/><rect x="0" y="13" width="4" height="4"/><rect x="9" y="13" width="4" height="4"/><rect x="17" y="13" width="5" height="4"/><rect x="0" y="17" width="4" height="5"/><rect x="9" y="17" width="8" height="5"/><rect x="0" y="22" width="4" height="4"/><rect x="4" y="26" width="13" height="5"/></svg>
</div>
<div style="position:absolute;left:0;top:105px;width:160px;height:35px;background:#232323">
<div style="position:absolute;left:0;top:2.6px;width:63px;text-align:center;font-family:'Liberation Sans',sans-serif;font-size:27.2px;line-height:30px;transform:scale(0.92,1);color:#dcdcdc">A</div>
<div style="position:absolute;left:63px;top:10px;width:71px;text-align:center;font-family:'Liberation Mono',monospace;font-size:14.3px;line-height:18px;color:#dcdcdc">65</div>
<svg style="position:absolute;left:134px;top:0" width="26" height="35" shape-rendering="crispEdges" fill="#ff0000"><rect x="4" y="0" width="13" height="4"/><rect x="0" y="4" width="4" height="5"/><rect x="17" y="4" width="5" height="5"/><rect x="0" y="9" width="4" height="4"/><rect x="17" y="9" width="5" height="4"/><rect x="0" y="13" width="22" height="4"/><rect x="0" y="17" width="4" height="5"/><rect x="17" y="17" width="5" height="5"/><rect x="0" y="22" width="4" height="4"/><rect x="17" y="22" width="5" height="4"/><rect x="0" y="26" width="4" height="5"/><rect x="17" y="26" width="5" height="5"/></svg>
</div>
<div style="position:absolute;left:0;top:140px;width:160px;height:35px;background:#2a7fd9">
<div style="position:absolute;left:0;top:2.6px;width:63px;text-align:center;font-family:'Liberation Sans',sans-serif;font-size:27.2px;line-height:30px;transform:scale(0.88,1);color:#ffffff">B</div>
<div style="position:absolute;left:63px;top:10px;width:71px;text-align:center;font-family:'Liberation Mono',monospace;font-size:14.3px;line-height:18px;color:#ffffff">66</div>
<svg style="position:absolute;left:134px;top:0" width="26" height="35" shape-rendering="crispEdges" fill="#400000"><rect x="0" y="0" width="17" height="4"/><rect x="0" y="4" width="4" height="5"/><rect x="17" y="4" width="5" height="5"/><rect x="0" y="9" width="4" height="4"/><rect x="17" y="9" width="5" height="4"/><rect x="0" y="13" width="17" height="4"/><rect x="0" y="17" width="4" height="5"/><rect x="17" y="17" width="5" height="5"/><rect x="0" y="22" width="4" height="4"/><rect x="17" y="22" width="5" height="4"/><rect x="0" y="26" width="17" height="5"/></svg>
<div style="position:absolute;left:0;top:34px;width:160px;height:1px;background:#232323"></div>
<div style="position:absolute;left:0;top:0;width:160px;height:1px;background:repeating-linear-gradient(90deg,#e08a1e 0 1px,transparent 1px 2px)"></div>
<div style="position:absolute;left:0;top:33px;width:160px;height:1px;background:repeating-linear-gradient(90deg,#e08a1e 0 1px,transparent 1px 2px)"></div>
<div style="position:absolute;left:159px;top:0;width:1px;height:34px;background:repeating-linear-gradient(180deg,#e08a1e 0 1px,transparent 1px 2px)"></div>
<div style="position:absolute;left:0;top:0;width:1px;height:34px;background:repeating-linear-gradient(180deg,#e08a1e 0 1px,transparent 1px 2px)"></div>
<div style="position:absolute;left:134px;top:0;width:17px;height:1px;background:repeating-linear-gradient(90deg,#400000 0 1px,#d8ffff 1px 2px)"></div>
</div>
<div style="position:absolute;left:0;top:175px;width:160px;height:35px;background:#232323">
<div style="position:absolute;left:0;top:34px;width:160px;height:1px;background:#555555"></div>
<div style="position:absolute;left:0;top:2.6px;width:63px;text-align:center;font-family:'Liberation Sans',sans-serif;font-size:27.2px;line-height:30px;transform:scale(0.86,1);color:#dcdcdc">C</div>
<div style="position:absolute;left:63px;top:10px;width:71px;text-align:center;font-family:'Liberation Mono',monospace;font-size:14.3px;line-height:18px;color:#dcdcdc">67</div>
<svg style="position:absolute;left:134px;top:0" width="26" height="35" shape-rendering="crispEdges" fill="#ff0000"><rect x="4" y="0" width="13" height="4"/><rect x="0" y="4" width="4" height="5"/><rect x="17" y="4" width="5" height="5"/><rect x="0" y="9" width="4" height="4"/><rect x="0" y="13" width="4" height="4"/><rect x="0" y="17" width="4" height="5"/><rect x="0" y="22" width="4" height="4"/><rect x="17" y="22" width="5" height="4"/><rect x="4" y="26" width="13" height="5"/></svg>
</div>
<div style="position:absolute;left:0;top:210px;width:160px;height:35px;background:#2a2a2a">
<div style="position:absolute;left:0;top:34px;width:160px;height:1px;background:#555555"></div>
<div style="position:absolute;left:0;top:2.6px;width:63px;text-align:center;font-family:'Liberation Sans',sans-serif;font-size:27.2px;line-height:30px;transform:scale(0.9,1);color:#dcdcdc">D</div>
<div style="position:absolute;left:63px;top:10px;width:71px;text-align:center;font-family:'Liberation Mono',monospace;font-size:14.3px;line-height:18px;color:#dcdcdc">68</div>
<svg style="position:absolute;left:134px;top:0" width="26" height="35" shape-rendering="crispEdges" fill="#ff0000"><rect x="0" y="0" width="17" height="4"/><rect x="0" y="4" width="4" height="5"/><rect x="17" y="4" width="5" height="5"/><rect x="0" y="9" width="4" height="4"/><rect x="17" y="9" width="5" height="4"/><rect x="0" y="13" width="4" height="4"/><rect x="17" y="13" width="5" height="4"/><rect x="0" y="17" width="4" height="5"/><rect x="17" y="17" width="5" height="5"/><rect x="0" y="22" width="4" height="4"/><rect x="17" y="22" width="5" height="4"/><rect x="0" y="26" width="17" height="5"/></svg>
</div>
<div style="position:absolute;left:0;top:245px;width:160px;height:35px;background:#232323">
<div style="position:absolute;left:0;top:34px;width:160px;height:1px;background:#555555"></div>
<div style="position:absolute;left:0;top:2.6px;width:63px;text-align:center;font-family:'Liberation Sans',sans-serif;font-size:27.2px;line-height:30px;transform:scale(0.75,1);color:#dcdcdc">E</div>
<div style="position:absolute;left:63px;top:10px;width:71px;text-align:center;font-family:'Liberation Mono',monospace;font-size:14.3px;line-height:18px;color:#dcdcdc">69</div>
<svg style="position:absolute;left:134px;top:0" width="26" height="35" shape-rendering="crispEdges" fill="#ff0000"><rect x="0" y="0" width="22" height="4"/><rect x="0" y="4" width="4" height="5"/><rect x="0" y="9" width="4" height="4"/><rect x="0" y="13" width="17" height="4"/><rect x="0" y="17" width="4" height="5"/><rect x="0" y="22" width="4" height="4"/><rect x="0" y="26" width="22" height="5"/></svg>
</div>
<div style="position:absolute;left:0;top:280px;width:160px;height:35px;background:#2a2a2a">
<div style="position:absolute;left:0;top:34px;width:160px;height:1px;background:#555555"></div>
<div style="position:absolute;left:0;top:2.6px;width:63px;text-align:center;font-family:'Liberation Sans',sans-serif;font-size:27.2px;line-height:30px;transform:scale(0.8,1);color:#dcdcdc">F</div>
<div style="position:absolute;left:63px;top:10px;width:71px;text-align:center;font-family:'Liberation Mono',monospace;font-size:14.3px;line-height:18px;color:#dcdcdc">70</div>
<svg style="position:absolute;left:134px;top:0" width="26" height="35" shape-rendering="crispEdges" fill="#ff0000"><rect x="0" y="0" width="22" height="4"/><rect x="0" y="4" width="4" height="5"/><rect x="0" y="9" width="4" height="4"/><rect x="0" y="13" width="17" height="4"/><rect x="0" y="17" width="4" height="5"/><rect x="0" y="22" width="4" height="4"/><rect x="0" y="26" width="4" height="5"/></svg>
</div>
<div style="position:absolute;left:0;top:315px;width:160px;height:35px;background:#232323">
<div style="position:absolute;left:0;top:34px;width:160px;height:1px;background:#555555"></div>
<div style="position:absolute;left:0;top:2.6px;width:63px;text-align:center;font-family:'Liberation Sans',sans-serif;font-size:27.2px;line-height:30px;transform:scale(0.88,1);color:#dcdcdc">G</div>
<div style="position:absolute;left:63px;top:10px;width:71px;text-align:center;font-family:'Liberation Mono',monospace;font-size:14.3px;line-height:18px;color:#dcdcdc">71</div>
<svg style="position:absolute;left:134px;top:0" width="26" height="35" shape-rendering="crispEdges" fill="#ff0000"><rect x="4" y="0" width="13" height="4"/><rect x="0" y="4" width="4" height="5"/><rect x="17" y="4" width="5" height="5"/><rect x="0" y="9" width="4" height="4"/><rect x="0" y="13" width="4" height="4"/><rect x="13" y="13" width="9" height="4"/><rect x="0" y="17" width="4" height="5"/><rect x="17" y="17" width="5" height="5"/><rect x="0" y="22" width="4" height="4"/><rect x="17" y="22" width="5" height="4"/><rect x="4" y="26" width="13" height="5"/></svg>
</div>
<div style="position:absolute;left:0;top:350px;width:160px;height:35px;background:#2a2a2a">
<div style="position:absolute;left:0;top:34px;width:160px;height:1px;background:#555555"></div>
<div style="position:absolute;left:0;top:2.6px;width:63px;text-align:center;font-family:'Liberation Sans',sans-serif;font-size:27.2px;line-height:30px;transform:scale(0.92,1);color:#dcdcdc">H</div>
<div style="position:absolute;left:63px;top:10px;width:71px;text-align:center;font-family:'Liberation Mono',monospace;font-size:14.3px;line-height:18px;color:#dcdcdc">72</div>
<svg style="position:absolute;left:134px;top:0" width="26" height="35" shape-rendering="crispEdges" fill="#ff0000"><rect x="0" y="0" width="4" height="4"/><rect x="17" y="0" width="5" height="4"/><rect x="0" y="4" width="4" height="5"/><rect x="17" y="4" width="5" height="5"/><rect x="0" y="9" width="4" height="4"/><rect x="17" y="9" width="5" height="4"/><rect x="0" y="13" width="22" height="4"/><rect x="0" y="17" width="4" height="5"/><rect x="17" y="17" width="5" height="5"/><rect x="0" y="22" width="4" height="4"/><rect x="17" y="22" width="5" height="4"/><rect x="0" y="26" width="4" height="5"/><rect x="17" y="26" width="5" height="5"/></svg>
</div>
<div style="position:absolute;left:0;top:385px;width:160px;height:35px;background:#232323">
<div style="position:absolute;left:0;top:34px;width:160px;height:1px;background:#555555"></div>
<div style="position:absolute;left:25px;top:8px;width:13px;height:2px;background:#dcdcdc"></div><div style="position:absolute;left:30px;top:10px;width:3px;height:20px;background:#dcdcdc"></div>
<div style="position:absolute;left:63px;top:10px;width:71px;text-align:center;font-family:'Liberation Mono',monospace;font-size:14.3px;line-height:18px;color:#dcdcdc">73</div>
<svg style="position:absolute;left:134px;top:0" width="26" height="35" shape-rendering="crispEdges" fill="#ff0000"><rect x="0" y="0" width="13" height="4"/><rect x="4" y="4" width="5" height="5"/><rect x="4" y="9" width="5" height="4"/><rect x="4" y="13" width="5" height="4"/><rect x="4" y="17" width="5" height="5"/><rect x="4" y="22" width="5" height="4"/><rect x="0" y="26" width="13" height="5"/></svg>
</div>
</div>
<div style="position:absolute;left:243px;top:107px;width:17px;height:396px;background:#171717;"></div>
<div style="position:absolute;left:244px;top:173px;width:15px;height:18px;background:#4d4d4d;"></div>
<svg style="position:absolute;left:247px;top:112px" width="9" height="8" viewBox="0 0 9 8"><path d="M1 6.4L4.5 2.6L8 6.4" fill="none" stroke="#808080" stroke-width="1.8"/></svg>
<svg style="position:absolute;left:247px;top:491px" width="9" height="8" viewBox="0 0 9 8"><path d="M1 1.6L4.5 5.4L8 1.6" fill="none" stroke="#808080" stroke-width="1.8"/></svg>
<svg style="position:absolute;left:273px;top:110px" width="258" height="344" shape-rendering="crispEdges"><rect x="0" y="0" width="43" height="43" fill="#ff0000"/><rect x="43" y="0" width="43" height="43" fill="#ff0000"/><rect x="86" y="0" width="43" height="43" fill="#ff0000"/><rect x="129" y="0" width="43" height="43" fill="#ff0000"/><rect x="172" y="0" width="43" height="43" fill="#6c0000"/><rect x="215" y="0" width="43" height="43" fill="#400000"/><rect x="0" y="43" width="43" height="43" fill="#ff0000"/><rect x="43" y="43" width="43" height="43" fill="#6c0000"/><rect x="86" y="43" width="43" height="43" fill="#400000"/><rect x="129" y="43" width="43" height="43" fill="#6c0000"/><rect x="172" y="43" width="43" height="43" fill="#ff0000"/><rect x="215" y="43" width="43" height="43" fill="#6c0000"/><rect x="0" y="86" width="43" height="43" fill="#ff0000"/><rect x="43" y="86" width="43" height="43" fill="#400000"/><rect x="86" y="86" width="43" height="43" fill="#6c0000"/><rect x="129" y="86" width="43" height="43" fill="#400000"/><rect x="172" y="86" width="43" height="43" fill="#ff0000"/><rect x="215" y="86" width="43" height="43" fill="#400000"/><rect x="0" y="129" width="43" height="43" fill="#ff0000"/><rect x="43" y="129" width="43" height="43" fill="#ff0000"/><rect x="86" y="129" width="43" height="43" fill="#ff0000"/><rect x="129" y="129" width="43" height="43" fill="#ff0000"/><rect x="172" y="129" width="43" height="43" fill="#400000"/><rect x="215" y="129" width="43" height="43" fill="#6c0000"/><rect x="0" y="172" width="43" height="43" fill="#ff0000"/><rect x="43" y="172" width="43" height="43" fill="#400000"/><rect x="86" y="172" width="43" height="43" fill="#6c0000"/><rect x="129" y="172" width="43" height="43" fill="#400000"/><rect x="172" y="172" width="43" height="43" fill="#ff0000"/><rect x="215" y="172" width="43" height="43" fill="#400000"/><rect x="0" y="215" width="43" height="43" fill="#ff0000"/><rect x="43" y="215" width="43" height="43" fill="#6c0000"/><rect x="86" y="215" width="43" height="43" fill="#400000"/><rect x="129" y="215" width="43" height="43" fill="#6c0000"/><rect x="172" y="215" width="43" height="43" fill="#ff0000"/><rect x="215" y="215" width="43" height="43" fill="#6c0000"/><rect x="0" y="258" width="43" height="43" fill="#ff0000"/><rect x="43" y="258" width="43" height="43" fill="#ff0000"/><rect x="86" y="258" width="43" height="43" fill="#ff0000"/><rect x="129" y="258" width="43" height="43" fill="#ff0000"/><rect x="172" y="258" width="43" height="43" fill="#6c0000"/><rect x="215" y="258" width="43" height="43" fill="#400000"/><rect x="0" y="301" width="43" height="43" fill="#400000"/><rect x="43" y="301" width="43" height="43" fill="#6c0000"/><rect x="86" y="301" width="43" height="43" fill="#400000"/><rect x="129" y="301" width="43" height="43" fill="#6c0000"/><rect x="172" y="301" width="43" height="43" fill="#400000"/><rect x="215" y="301" width="43" height="43" fill="#6c0000"/></svg>
<div style="position:absolute;left:265px;top:457px;width:274px;height:46px;background:#2a2a2a;"></div>
<svg style="position:absolute;left:292.0px;top:464.75px;overflow:visible" width="30" height="30" viewBox="0 0 30 30" fill="none" stroke="#3ecf8e" stroke-width="2.3" stroke-linecap="round" stroke-linejoin="round"><path d="M3.5 1.25H12.2V3.15L10.2 7.65V14.45L12.7 17.85V28.75H1.4V17.45L6.4 12.15V7.65L3.5 5.05Z"/><path d="M26.5 1.25H17.8V3.15L19.8 7.65V14.45L17.3 17.85V28.75H28.6V17.45L23.6 12.15V7.65L26.5 5.05Z"/><path d="M10.3 8.7Q15 4.7 19.7 8.7M10.3 14.45L15 18.5L19.7 14.45M15 18.5V20.3M12.7 19.6H17.3"/></svg>
<div style="position:absolute;left:336.60px;top:473.57px;font-family:'Liberation Sans',sans-serif;font-size:12.2px;line-height:12.2px;color:#ffffff;white-space:pre;transform-origin:0 0;transform:scaleX(0.9709);">Символ</div>
<div style="position:absolute;left:385px;top:468px;width:30px;height:23px;background:#2a2a2a;border:1px solid #8c8c8c;box-sizing:border-box;"></div>
<div style="position:absolute;left:385px;top:474px;font-family:'Liberation Sans',sans-serif;font-size:11px;line-height:11px;color:#ffffff;white-space:pre;width:30px;text-align:center;">B</div>
<div style="position:absolute;left:425.50px;top:473.57px;font-family:'Liberation Sans',sans-serif;font-size:12.2px;line-height:12.2px;color:#ffffff;white-space:pre;transform-origin:0 0;transform:scaleX(0.9595);">Код</div>
<div style="position:absolute;left:450px;top:468px;width:64px;height:23px;background:#2a2a2a;border:1px solid #8c8c8c;box-sizing:border-box;"></div>
<div style="position:absolute;left:452px;top:474px;font-family:'Liberation Sans',sans-serif;font-size:11px;line-height:11px;color:#ffffff;white-space:pre;width:44px;text-align:center;">66</div>
<div style="position:absolute;left:497px;top:470px;width:15.4px;height:9px;background:#343434;border-radius:2px;"></div>
<div style="position:absolute;left:497px;top:480.2px;width:15.4px;height:9.4px;background:#343434;border-radius:2px;"></div>
<svg style="position:absolute;left:500.5px;top:471.8px" width="8" height="5" viewBox="0 0 8 5"><path d="M0.2 4.4L4 0.2L7.8 4.4Z" fill="#fff"/></svg>
<svg style="position:absolute;left:500.5px;top:482.2px" width="8" height="5" viewBox="0 0 8 5"><path d="M0.2 0.2L4 4.4L7.8 0.2Z" fill="#fff"/></svg>
<div style="position:absolute;left:0px;top:503px;width:622px;height:29px;background:#424242;"></div>
<div style="position:absolute;left:405px;top:506px;width:1px;height:22px;background:#9c9c9c;"></div>
<div style="position:absolute;left:455px;top:506px;width:1px;height:22px;background:#9c9c9c;"></div>
<div style="position:absolute;left:535px;top:506px;width:1px;height:22px;background:#9c9c9c;"></div>
<div style="position:absolute;left:408.70px;top:510.22px;font-family:'Liberation Sans',sans-serif;font-size:12.5px;line-height:12.5px;color:#ffffff;white-space:pre;transform-origin:0 0;transform:scaleX(0.8982);">NORM</div>
<div style="position:absolute;left:458.40px;top:510.22px;font-family:'Liberation Sans',sans-serif;font-size:12.5px;line-height:12.5px;color:#ffffff;white-space:pre;transform-origin:0 0;transform:scaleX(0.8635);">X,Y: 1, 3</div>
<div style="position:absolute;left:539.00px;top:510.22px;font-family:'Liberation Sans',sans-serif;font-size:12.5px;line-height:12.5px;color:#ffffff;white-space:pre;transform-origin:0 0;transform:scaleX(0.8460);">1.6.10.78</div>
<div style="position:absolute;left:612px;top:528px;width:2px;height:2px;background:#303030;"></div>
<div style="position:absolute;left:611px;top:527px;width:2px;height:2px;background:#d8d8d8;"></div>
<div style="position:absolute;left:615px;top:528px;width:2px;height:2px;background:#303030;"></div>
<div style="position:absolute;left:614px;top:527px;width:2px;height:2px;background:#d8d8d8;"></div>
<div style="position:absolute;left:618px;top:528px;width:2px;height:2px;background:#303030;"></div>
<div style="position:absolute;left:617px;top:527px;width:2px;height:2px;background:#d8d8d8;"></div>
<div style="position:absolute;left:615px;top:525px;width:2px;height:2px;background:#303030;"></div>
<div style="position:absolute;left:614px;top:524px;width:2px;height:2px;background:#d8d8d8;"></div>
<div style="position:absolute;left:618px;top:525px;width:2px;height:2px;background:#303030;"></div>
<div style="position:absolute;left:617px;top:524px;width:2px;height:2px;background:#d8d8d8;"></div>
<div style="position:absolute;left:618px;top:522px;width:2px;height:2px;background:#303030;"></div>
<div style="position:absolute;left:617px;top:521px;width:2px;height:2px;background:#d8d8d8;"></div>
<div style="position:absolute;left:0px;top:0px;width:622px;height:1px;background:#383838;"></div>
<div style="position:absolute;left:0px;top:0px;width:1px;height:532px;background:#383838;"></div>
<div style="position:absolute;left:621px;top:0px;width:1px;height:532px;background:#383838;"></div>
<div style="position:absolute;left:0px;top:531px;width:622px;height:1px;background:#383838;"></div>
</body></html>
